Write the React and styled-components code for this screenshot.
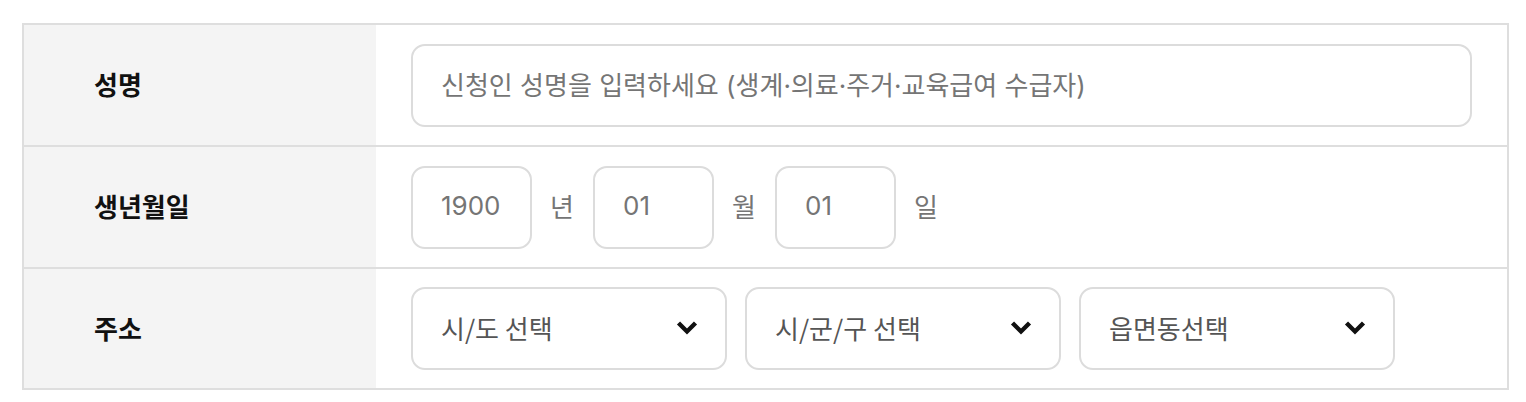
import React from 'react'
import styled, { createGlobalStyle } from 'styled-components'

const GlobalStyle = createGlobalStyle`
    body {
        margin: 0;
        background: #fff;
        font-family: "Inter", "Noto Sans CJK KR", sans-serif;
    }
`

const Page = styled.div`
    padding: 23px 0 0 22px;
`

const Table = styled.div`
    width: 1487px;
    box-sizing: border-box;
    border: 2px solid #dedede;
`

const Row = styled.div`
    display: grid;
    grid-template-columns: 352px 1fr;
    height: ${props => props.last ? 119 : 122}px;
    box-sizing: border-box;
    border-bottom: ${props => props.last ? 'none' : '2px solid #dedede'};
`

const Label = styled.div`
    display: flex;
    align-items: center;
    padding: 0 0 3px 70px;
    background: #f4f4f4;
    font-family: "Noto Sans CJK KR", sans-serif;
    font-size: 26px;
    font-weight: 700;
    color: #111;
`

const Cell = styled.div`
    display: flex;
    align-items: center;
    gap: ${props => props.gap || 0}px;
    padding: 0 35px;
`

const Field = styled.div`
    display: flex;
    flex-shrink: 0;
    align-items: center;
    width: ${props => props.width ? props.width + 'px' : '100%'};
    height: 83px;
    box-sizing: border-box;
    padding: 0 27px 3px 28px;
    border: 2px solid #dcdcdc;
    border-radius: 14px;
    background: #fff;
    font-family: "Inter", "Noto Sans CJK KR", sans-serif;
    font-size: 26px;
    color: #757575;
    justify-content: ${props => props.select ? 'space-between' : 'flex-start'};
`

const Unit = styled.span`
    width: 25px;
    flex-shrink: 0;
    font-family: "Noto Sans CJK KR", sans-serif;
    font-size: 26px;
    color: #757575;
    padding-bottom: 3px;
`

const SelectText = styled.span`
    color: #555;
    font-family: "Noto Sans CJK KR", sans-serif;
`

const Chevron = () => (
    <svg width="22" height="15" viewBox="0 0 22 15">
        <path d="M2.5 3 L11 11.5 L19.5 3" fill="none" stroke="#111" strokeWidth="4.4" />
    </svg>
)

const App = () => {
    const selects = ['시/도 선택', '시/군/구 선택', '읍면동선택']
    return (
        <Page>
            <GlobalStyle />
            <Table>
                <Row>
                    <Label>성명</Label>
                    <Cell>
                        <Field>신청인 성명을 입력하세요 (생계·의료·주거·교육급여 수급자)</Field>
                    </Cell>
                </Row>
                <Row>
                    <Label>생년월일</Label>
                    <Cell gap={18}>
                        <Field width={121}>1900</Field>
                        <Unit>년</Unit>
                        <Field width={121}>01</Field>
                        <Unit>월</Unit>
                        <Field width={121}>01</Field>
                        <Unit>일</Unit>
                    </Cell>
                </Row>
                <Row last>
                    <Label>주소</Label>
                    <Cell gap={18}>
                        {selects.map(s => (
                            <Field key={s} width={316} select>
                                <SelectText>{s}</SelectText>
                                <Chevron />
                            </Field>
                        ))}
                    </Cell>
                </Row>
            </Table>
        </Page>
    )
}

export default App
